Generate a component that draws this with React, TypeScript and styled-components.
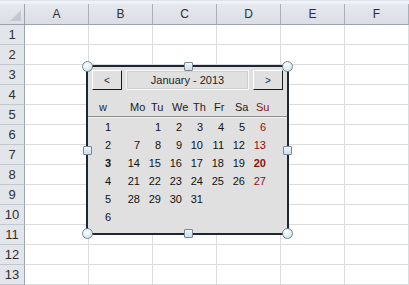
import * as React from "react";
import styled, { createGlobalStyle } from "styled-components";

const columns = ["A", "B", "C", "D", "E", "F"];
const rows = Array.from({ length: 13 }, (_, i) => i + 1);
const dayNames = ["Mo", "Tu", "We", "Th", "Fr", "Sa", "Su"];

// January 2013 starts on a Tuesday
const buildWeeks = () => {
    const weeks: (number | null)[][] = [];
    let week: (number | null)[] = [null];
    for (let d = 1; d <= 31; d++) {
        week.push(d);
        if (week.length === 7) {
            weeks.push(week);
            week = [];
        }
    }
    if (week.length) {
        while (week.length < 7) week.push(null);
        weeks.push(week);
    }
    weeks.push([null, null, null, null, null, null, null]);
    return weeks;
};

const TODAY = 20;

const App: React.FC = () => {
    const weeks = buildWeeks();
    return (
        <>
            <GlobalStyle />
            <Sheet>
                <TopStrip />
                <Corner>
                    <CornerMark />
                </Corner>
                {columns.map((c) => (
                    <ColHeader key={c}>{c}</ColHeader>
                ))}
                {rows.map((r) => (
                    <React.Fragment key={r}>
                        <RowHeader>{r}</RowHeader>
                        {columns.map((c) => (
                            <Cell key={c} />
                        ))}
                    </React.Fragment>
                ))}

                <Calendar>
                    <NavRow>
                        <NavButton>&lt;</NavButton>
                        <Title>January - 2013</Title>
                        <NavButton>&gt;</NavButton>
                    </NavRow>
                    <DayHead>
                        <WeekLabel>w</WeekLabel>
                        {dayNames.map((d, i) => (
                            <DayLabel key={d} $sunday={i === 6}>
                                {d}
                            </DayLabel>
                        ))}
                    </DayHead>
                    <Divider />
                    <Days>
                        {weeks.map((w, wi) => (
                            <React.Fragment key={wi}>
                                <WeekNum $bold={w.includes(TODAY)}>{wi + 1}</WeekNum>
                                {w.map((d, di) => (
                                    <DayNum
                                        key={di}
                                        $sunday={di === 6}
                                        $bold={d === TODAY}
                                    >
                                        {d ?? ""}
                                    </DayNum>
                                ))}
                            </React.Fragment>
                        ))}
                    </Days>

                    <Handle $round style={{ left: -6, top: -6 }} />
                    <Handle style={{ left: 96, top: -5 }} />
                    <Handle $round style={{ right: -6, top: -6 }} />
                    <Handle style={{ left: -5, top: 79 }} />
                    <Handle style={{ right: -5, top: 79 }} />
                    <Handle $round style={{ left: -6, bottom: -6 }} />
                    <Handle style={{ left: 96, bottom: -5 }} />
                    <Handle $round style={{ right: -6, bottom: -6 }} />
                </Calendar>
            </Sheet>
        </>
    );
};

const GlobalStyle = createGlobalStyle`
    body {
        margin: 0;
        background: #fff;
        font-family: "Liberation Sans", Arial, sans-serif;
    }
`;

const Sheet = styled.div`
    position: relative;
    width: 409px;
    height: 285px;
    overflow: hidden;
    display: grid;
    grid-template-columns: 25px repeat(6, 64px);
    grid-template-rows: 4px 21px repeat(13, 20px);
    background: #fff;
`;

const TopStrip = styled.div`
    grid-column: 1 / -1;
    background: #eef1f6;
    border-top: 1px solid #dde3ea;
`;

const headerBase = `
    box-sizing: border-box;
    background: linear-gradient(#e6e9ee, #dadfe5);
    color: #2f2f2f;
    font-size: 12px;
    display: flex;
    align-items: center;
    justify-content: center;
`;

const Corner = styled.div`
    ${headerBase};
    position: relative;
    border-right: 1px solid #9da3aa;
    border-bottom: 1px solid #9da3aa;
`;

const CornerMark = styled.div`
    position: absolute;
    right: 3px;
    bottom: 3px;
    width: 0;
    height: 0;
    border-left: 11px solid transparent;
    border-bottom: 11px solid #c4c9cf;
`;

const ColHeader = styled.div`
    ${headerBase};
    border-right: 1px solid #aab0b8;
    border-bottom: 1px solid #9da3aa;
`;

const RowHeader = styled.div`
    ${headerBase};
    background: #e2e6eb;
    border-right: 1px solid #9da3aa;
    border-bottom: 1px solid #c3c8ce;
    font-size: 13px;
`;

const Cell = styled.div`
    box-sizing: border-box;
    border-right: 1px solid #dadcdd;
    border-bottom: 1px solid #dadcdd;
`;

const Calendar = styled.div`
    position: absolute;
    left: 86px;
    top: 65px;
    width: 203px;
    height: 170px;
    box-sizing: border-box;
    border: 2px solid #1d2733;
    background: #e0e0e0;
    font-family: "Liberation Sans", Arial, sans-serif;
    font-size: 11px;
    color: #111;
    display: flex;
    flex-direction: column;
`;

const NavRow = styled.div`
    display: flex;
    gap: 4px;
    padding: 3px 4px 0 4px;
    height: 20px;
`;

const NavButton = styled.div`
    width: 30px;
    box-sizing: border-box;
    border-top: 1px solid #fff;
    border-left: 1px solid #fff;
    border-right: 1px solid #1a1a1a;
    border-bottom: 1px solid #1a1a1a;
    display: flex;
    align-items: center;
    justify-content: center;
    color: #1a2a4a;
    font-size: 10px;
`;

const Title = styled.div`
    flex: 1;
    box-sizing: border-box;
    border: 1px solid #f7f7f7;
    box-shadow: inset 0 0 0 1px #cfcfcf;
    display: flex;
    align-items: center;
    justify-content: center;
    color: #1e1e1e;
    font-size: 11px;
`;

const DayHead = styled.div`
    display: grid;
    grid-template-columns: 31px repeat(7, 21px);
    height: 18px;
    margin-top: 8px;
    align-items: center;
`;

const WeekLabel = styled.div`
    padding-left: 11px;
    color: #1a2a4a;
`;

const DayLabel = styled.div<{ $sunday?: boolean }>`
    padding-left: 11px;
    white-space: nowrap;
    color: ${(p) => (p.$sunday ? "#8b1010" : "#1a1a2a")};
`;

const Divider = styled.div`
    height: 1px;
    background: #8c8c8c;
    border-bottom: 1px solid #f4f4f4;
`;

const Days = styled.div`
    display: grid;
    grid-template-columns: 31px repeat(7, 21px);
    grid-auto-rows: 18px;
    align-items: center;
`;

const WeekNum = styled.div<{ $bold?: boolean }>`
    padding-left: 17px;
    font-weight: ${(p) => (p.$bold ? "bold" : "normal")};
`;

const DayNum = styled.div<{ $sunday?: boolean; $bold?: boolean }>`
    text-align: right;
    white-space: nowrap;
    font-weight: ${(p) => (p.$bold ? "bold" : "normal")};
    color: ${(p) => (p.$sunday ? "#8b1010" : "#111")};
`;

const Handle = styled.div<{ $round?: boolean }>`
    position: absolute;
    box-sizing: border-box;
    width: ${(p) => (p.$round ? "11px" : "9px")};
    height: ${(p) => (p.$round ? "11px" : "9px")};
    border-radius: ${(p) => (p.$round ? "50%" : "1px")};
    border: 1px solid #7d8791;
    background: ${(p) =>
        p.$round
            ? "radial-gradient(circle at 40% 35%, #ffffff, #d6ecf2 60%, #b7d6e0)"
            : "linear-gradient(#eef6fb, #c8dfee)"};
`;

export default App;
